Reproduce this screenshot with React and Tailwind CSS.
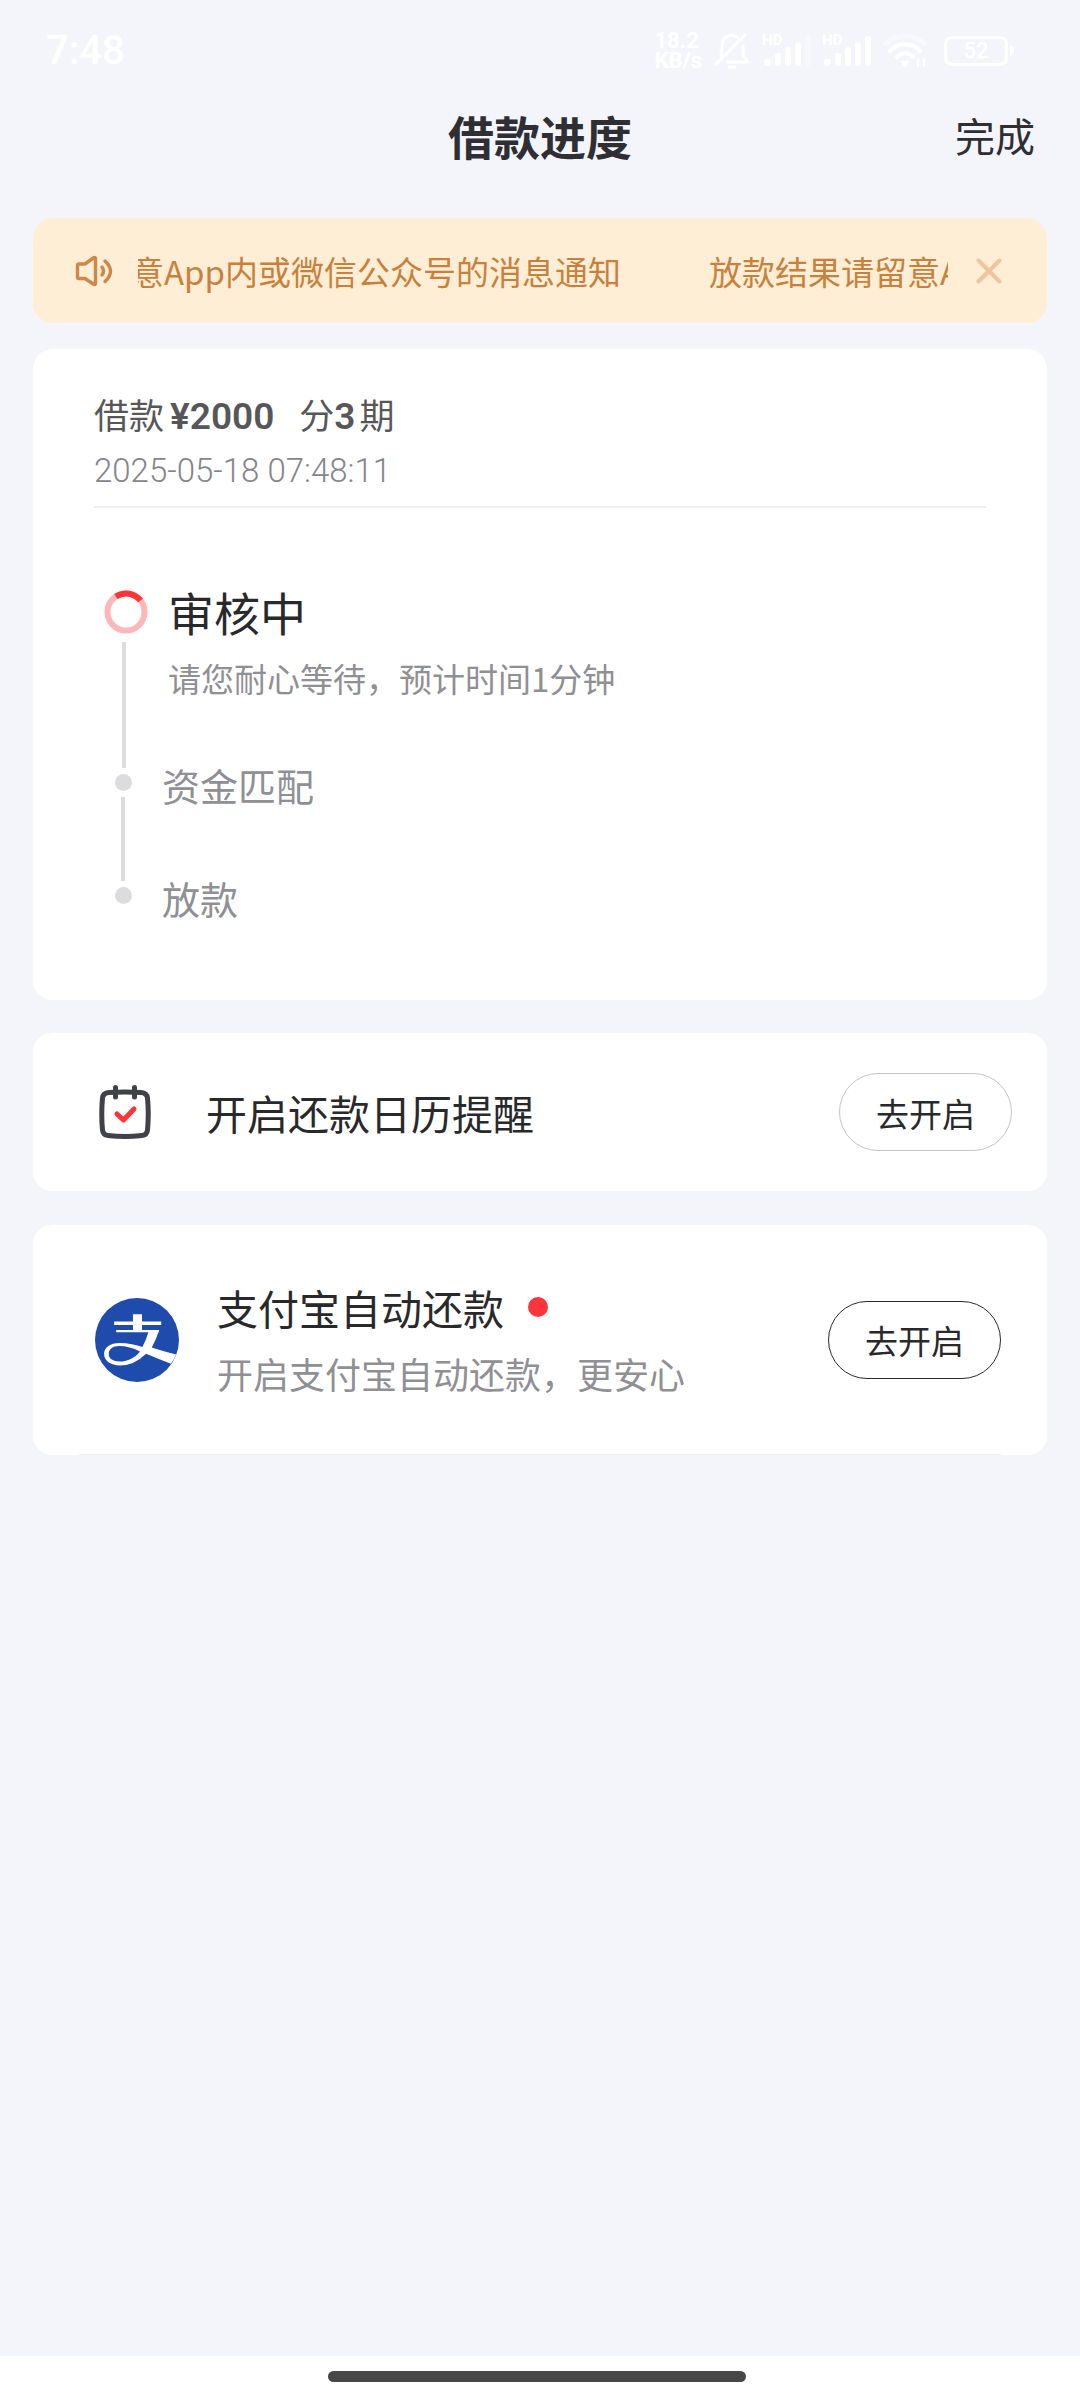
const CJK = "font-['Noto_Sans_CJK_SC',sans-serif]";
const DIGITS = "font-['Roboto','Noto_Sans_CJK_SC',sans-serif]";

const NOTICE = '放款结果请留意App内或微信公众号的消息通知';

function BellOff() {
  return (
    <svg className="mx-1 h-9 w-9" viewBox="0 0 36 36" fill="none" stroke="#fff" strokeWidth="3" strokeLinecap="round" strokeLinejoin="round">
      <path d="M26 7C23 2 15 1 11 5C8 8 8 12 8 16L7 22M13 29H34L29 22V13M2 31L31 2" />
      <path d="M15 34H21" />
    </svg>
  );
}

function Signal({ weak }) {
  return (
    <svg className="h-9 w-[52px]" viewBox="0 0 52 36">
      <text x="0" y="12" fontSize="15" fontWeight="700" fontFamily="Roboto, sans-serif" fill="#fff">HD</text>
      <rect x="2" y="26" width="7" height="7" rx="3" fill="#fff" />
      <rect x="13" y="20" width="6" height="13" rx="3" fill="#fff" />
      <rect x="23" y="14" width="6" height="19" rx="3" fill="#fff" />
      <rect x="33" y="9" width="6" height="24" rx="3" fill="#fff" />
      <rect x="43" y="3" width="6" height="30" rx="3" fill="#fff" opacity={weak ? 0.35 : 1} />
    </svg>
  );
}

function Wifi() {
  return (
    <svg className="h-9 w-[46px]" viewBox="0 0 46 36" fill="none" stroke="#fff" strokeWidth="4" strokeLinecap="round">
      <path d="M3 11C14 0 32 0 43 11" opacity=".45" />
      <path d="M8 18C16 9 30 9 38 18M15 24C20 19 26 19 31 24" />
      <path d="M20 29H26L23 33Z" fill="#fff" strokeWidth="2" />
      <path d="M36 26V33M42 26V33" strokeWidth="2" />
    </svg>
  );
}

function StatusBar() {
  return (
    <div className="flex h-[100px] items-center justify-between pr-[66px] pb-[30px] pl-[46px] pt-1 font-['Roboto',sans-serif] text-white">
      <span className="pt-7 text-[40px] leading-none font-medium">7:48</span>
      <div className="flex items-center gap-2 pt-7">
        <div className="text-[22px] leading-[20px] font-bold">
          <div>18.2</div>
          <div>KB/s</div>
        </div>
        <BellOff />
        <Signal weak />
        <Signal />
        <Wifi />
        <div className="ml-2 flex items-center gap-0.5">
          <div className="flex h-[30px] w-16 items-center justify-center rounded-lg border-3 border-white text-[22px] leading-none font-medium">52</div>
          <div className="h-2.5 w-1 rounded-r bg-white" />
        </div>
      </div>
    </div>
  );
}

function Header() {
  return (
    <header className="grid h-[70px] grid-cols-[1fr_auto_1fr] items-center px-[45px] text-[#2e2e33]">
      <h1 className="col-start-2 text-[46px] leading-none font-bold">借款进度</h1>
      <button type="button" className="justify-self-end text-[40px] leading-none">完成</button>
    </header>
  );
}

function Notice() {
  return (
    <div className="mt-12 flex h-[105px] items-center rounded-[20px] bg-[#ffeed6] pr-[45px] pl-[42px] text-[#c8813c]">
      <svg className="h-8 w-10 shrink-0" viewBox="0 0 40 32" fill="none" stroke="#cf8748" strokeWidth="3.4" strokeLinecap="round" strokeLinejoin="round">
        <path d="M4 9H10L19 2.5Q20.500 2 20.500 4V28Q20.500 30 19 29.500L10 23.500H4Q2.500 23.500 2.500 22V10.500Q2.500 9 4 9Z" />
        <path d="M27 12Q30 16 27 20M30 6Q41 16 30 26.500" />
      </svg>
      <div className="ml-[23px] flex min-w-0 flex-1 gap-[88px] overflow-hidden text-[33px] leading-[48px] whitespace-nowrap">
        <span className="-ml-[205px]">{NOTICE}</span>
        <span aria-hidden="true">{NOTICE}</span>
      </div>
      <button type="button" aria-label="关闭" className="ml-7 shrink-0">
        <svg className="h-[26px] w-[26px]" viewBox="0 0 26 26" stroke="#f0c49c" strokeWidth="4" strokeLinecap="round">
          <path d="M2.500 2.500L23.500 23.500M23.500 2.500L2.500 23.500" />
        </svg>
      </button>
    </div>
  );
}

function Spinner() {
  return (
    <svg className="h-11 w-11 shrink-0" viewBox="0 0 44 44" fill="none" strokeWidth="6">
      <circle cx="22" cy="22" r="18.500" stroke="#fcb8b8" />
      <path d="M11.900 6.500A18.500 18.500 0 0 1 36.500 10.500" stroke="#fb3539" />
    </svg>
  );
}

function LoanCard() {
  return (
    <section className="mt-[26px] rounded-[20px] bg-white px-[61px] pt-10 pb-[85px]">
      <div className="border-b-2 border-[#f0f0f1] pb-[15px]">
        <p className="flex items-baseline text-[35px] leading-[50px] text-[#57575a]">
          <span>借款</span>
          <b className={`${DIGITS} ml-1.5 text-[37px] font-semibold`}>¥2000</b>
          <span className="ml-[25px]">分</span>
          <b className={`${DIGITS} text-[37px] font-semibold`}>3</b>
          <span className="ml-1">期</span>
        </p>
        <time className={`${DIGITS} mt-2 block text-[33px] leading-[41px] font-light text-[#85858a]`}>2025-05-18 07:48:11</time>
      </div>
      <ol className="pt-[75px]">
        <li className="grid grid-cols-[64px_1fr] gap-x-[10px]">
          <div className="flex flex-col items-center gap-2 pt-[7px]">
            <Spinner />
            <div className="mr-1 w-1 flex-1 bg-[#dcdcde]" />
          </div>
          <div className="h-[185px]">
            <h2 className="text-[46px] leading-[56px] text-[#29292c]">审核中</h2>
            <p className="mt-3.5 text-[33px] leading-[50px] text-[#8f8f94]">请您耐心等待，预计时间1分钟</p>
          </div>
        </li>
        <li className="grid grid-cols-[58px_1fr] gap-x-[10px]">
          <div className="flex flex-col items-center gap-1.5 pt-1.5">
            <div className="h-[17px] w-[17px] rounded-full bg-[#dcdcde]" />
            <div className="w-1 flex-1 bg-[#dcdcde]" />
          </div>
          <h2 className="h-[113px] text-[38px] leading-[34px] text-[#8f8f94]">资金匹配</h2>
        </li>
        <li className="grid grid-cols-[58px_1fr] gap-x-[10px]">
          <div className="flex flex-col items-center pt-1.5">
            <div className="h-[17px] w-[17px] rounded-full bg-[#dcdcde]" />
          </div>
          <h2 className="text-[38px] leading-[34px] text-[#8f8f94]">放款</h2>
        </li>
      </ol>
    </section>
  );
}

function CalendarIcon() {
  return (
    <svg className="h-14 w-14 shrink-0" viewBox="0 0 56 56" fill="none" strokeLinecap="round" strokeLinejoin="round">
      <path d="M12 8.500Q28 7.500 44 8.500Q50 9 50.500 14Q52 30 50.500 46Q50 51 45 51.500Q28 53.500 11 51.500Q6 51 5.500 46Q4 30 5.500 14Q6 9 12 8.500Z" stroke="#414149" strokeWidth="5" />
      <path d="M18.500 3.500V13M37.500 3.500V13" stroke="#414149" strokeWidth="5" />
      <path d="M20 30L26.500 36L37 25" stroke="#fb3539" strokeWidth="5" />
    </svg>
  );
}

function AlipayIcon() {
  return (
    <svg className="h-[84px] w-[84px] shrink-0" viewBox="0 0 250 250">
      <circle cx="125" cy="125" r="125" fill="#1f4bad" />
      <g fill="#fff">
        <path d="M113 48H140V96H113ZM57 70H197V80H57ZM63 95H190V102H63Z" />
        <path d="M161 95H191Q182 124 169 147Q200 158 242 168Q236 182 226 196Q190 182 152 166Q116 201 75 201C46 201 27 186 27 166C27 147 46 134 72 134C100 134 122 140 141 146Q153 124 161 95ZM134 159C112 149 94 143 72 143C52 143 41 153 41 167C41 181 54 189 74 189C98 189 120 177 134 159Z" fillRule="evenodd" />
      </g>
    </svg>
  );
}

function OpenButton({ label, className }) {
  return (
    <button type="button" aria-label={label} className={`h-[78px] w-[173px] shrink-0 rounded-full border pt-0.5 text-[33px] leading-none text-[#29292c] ${className}`}>
      去开启
    </button>
  );
}

export default function App() {
  return (
    <div className={`flex min-h-screen flex-col bg-[#f4f5fb] ${CJK}`}>
      <StatusBar />
      <Header />
      <main className="flex-1 px-[33px]">
        <Notice />
        <LoanCard />
        <section className="mt-[33px] flex h-[158px] items-center rounded-[20px] bg-white pr-[35px] pl-16">
          <CalendarIcon />
          <h2 className="ml-[53px] flex-1 text-[41px] leading-[60px] text-[#29292c]">开启还款日历提醒</h2>
          <OpenButton label="去开启还款日历提醒" className="border-[#c4c4c6]" />
        </section>
        <section className="mt-[34px] rounded-[20px] bg-white px-[46px]">
          <div className="flex h-[230px] items-center border-b border-[#f0f0f1] pl-4">
            <AlipayIcon />
            <div className="ml-[38px] flex-1">
              <h2 className="flex items-center gap-6 text-[41px] leading-[60px] text-[#29292c]">
                支付宝自动还款
                <span className="h-5 w-5 rounded-full bg-[#fb3539]" />
              </h2>
              <p className="mt-1.5 text-[36px] leading-[60px] text-[#8f8f94]">开启支付宝自动还款，更安心</p>
            </div>
            <OpenButton label="去开启支付宝自动还款" className="border-[#29292c]" />
          </div>
        </section>
      </main>
      <footer className="flex h-11 items-center justify-center bg-white pr-1.5 pb-1">
        <div className="h-[11px] w-[418px] rounded-full bg-[#474747]" />
      </footer>
    </div>
  );
}
